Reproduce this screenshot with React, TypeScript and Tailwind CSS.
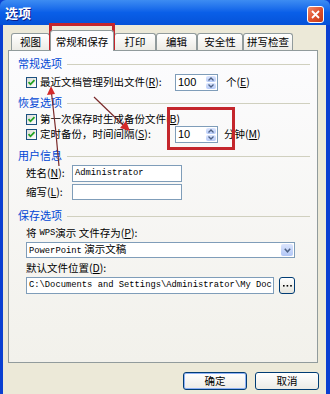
import React from 'react';

const K: React.FC<{ c: string }> = ({ c }) => <span className="underline">{c}</span>;

const Check: React.FC = () => (
  <div className="w-[11px] h-[11px] border border-[#1c5180] bg-gradient-to-br from-[#dcdcd7] to-white flex items-center justify-center shrink-0">
    <svg width="9" height="9" viewBox="0 0 9 9">
      <path d="M1.5 4.2 L3.5 6.3 L7.5 2.2" stroke="#21a121" strokeWidth="1.8" fill="none" />
    </svg>
  </div>
);

const Heading: React.FC<{ text: string; className?: string }> = ({ text, className }) => (
  <div className={`flex items-center h-[14px] pr-[7px] ${className ?? ''}`}>
    <span className="text-[#0046d5] text-[11px]">{text}</span>
    <div className="flex-1 h-px bg-[#d0d0bf] ml-[5px] mt-[2px]" />
  </div>
);

const Spin: React.FC<{ value: string }> = ({ value }) => (
  <div className="w-[43px] h-[17px] border border-[#7f9db9] bg-white flex items-center">
    <span className="flex-1 pl-[2px] font-['Liberation_Sans',sans-serif] text-[11px]">{value}</span>
    <div className="w-[12px] h-full flex flex-col gap-px p-px">
      <div className="flex-1 rounded-[2px] bg-gradient-to-b from-[#dbe5fd] to-[#b7cbf8] flex items-center justify-center">
        <svg width="6" height="4" viewBox="0 0 6 4"><path d="M0.5 3.5 L3 1 L5.5 3.5" stroke="#4d6185" strokeWidth="1.3" fill="none" /></svg>
      </div>
      <div className="flex-1 rounded-[2px] bg-gradient-to-b from-[#dbe5fd] to-[#b7cbf8] flex items-center justify-center">
        <svg width="6" height="4" viewBox="0 0 6 4"><path d="M0.5 0.5 L3 3 L5.5 0.5" stroke="#4d6185" strokeWidth="1.3" fill="none" /></svg>
      </div>
    </div>
  </div>
);

const tabBase =
  'h-[17px] border border-b-0 border-[#919b9c] rounded-t-[3px] bg-gradient-to-b from-white to-[#ecebe5] flex items-center justify-center';

export default function App() {
  return (
    <div className="relative w-[330px] h-[394px] overflow-hidden bg-[#0a3fd1] font-['Noto_Sans_CJK_SC',sans-serif] text-[10.5px] leading-none text-black">
      {/* 标题栏 */}
      <div className="h-[25px] flex items-center justify-between pl-[5px] pr-[6px] rounded-t-[6px] bg-gradient-to-b from-[#3d8cf2] via-[#0a5fe8] to-[#0552d8]">
        <span className="text-white font-bold text-[13px] [text-shadow:1px_1px_0_#0a1e8a]">选项</span>
        <div className="w-[17px] h-[17px] mt-[4px] rounded-[3px] border border-white bg-gradient-to-br from-[#f08a6a] via-[#e0512d] to-[#c23a18] flex items-center justify-center">
          <svg width="9" height="9" viewBox="0 0 9 9">
            <path d="M1 1 L8 8 M8 1 L1 8" stroke="white" strokeWidth="1.8" />
          </svg>
        </div>
      </div>

      {/* 对话框主体 */}
      <div className="ml-[3px] w-[323px] h-[369px] bg-[#ece9d8] pl-[5px] pt-[3px] flex flex-col">
        {/* 选项卡 */}
        <div className="h-[22px] flex items-end pl-[3px]">
          <div className={`${tabBase} w-[39px]`}>视图</div>
          <div className="relative z-10 -mb-px h-[21px] w-[64px] border border-b-0 border-[#919b9c] rounded-t-[3px] bg-[#fcfcfe] flex items-center justify-center pt-[2px]">
            常规和保存
          </div>
          <div className={`${tabBase} w-[42px]`}>打印</div>
          <div className={`${tabBase} w-[41px]`}>编辑</div>
          <div className={`${tabBase} w-[46px]`}>安全性</div>
          <div className={`${tabBase} w-[50px]`}>拼写检查</div>
        </div>

        {/* 面板 */}
        <div className="w-[310px] h-[313px] border border-[#919b9c] bg-gradient-to-b from-[#fcfcfe] to-[#f2f1eb] pl-[9px] pt-[5px] flex flex-col">
          <Heading text="常规选项" />
          <div className="mt-[3px] h-[18px] flex items-center pl-[8px]">
            <Check />
            <span className="ml-[3px] w-[135px]">
              最近文档管理列出文件(<K c="R" />):
            </span>
            <Spin value="100" />
            <span className="ml-[8px]">
              个(<K c="E" />)
            </span>
          </div>

          <Heading text="恢复选项" className="mt-[4px]" />
          <div className="mt-[3px] h-[14px] flex items-center pl-[8px]">
            <Check />
            <span className="ml-[3px]">
              第一次保存时生成备份文件(<K c="B" />)
            </span>
          </div>
          <div className="h-[16px] flex items-center pl-[8px]">
            <Check />
            <span className="ml-[3px] w-[135px]">
              定时备份，时间间隔(<K c="S" />):
            </span>
            <Spin value="10" />
            <span className="ml-[6px]">
              分钟(<K c="M" />)
            </span>
          </div>

          <Heading text="用户信息" className="mt-[6px]" />
          <div className="mt-[3px] h-[17px] flex items-center pl-[8px]">
            <span className="w-[46px]">
              姓名(<K c="N" />):
            </span>
            <div className="w-[110px] h-[17px] border border-[#7f9db9] bg-white flex items-center pl-[2px] font-['Liberation_Mono',monospace] text-[8.8px]">
              Administrator
            </div>
          </div>
          <div className="mt-[2px] h-[16px] flex items-center pl-[8px]">
            <span className="w-[46px]">
              缩写(<K c="L" />):
            </span>
            <div className="w-[110px] h-[16px] border border-[#7f9db9] bg-white" />
          </div>

          <Heading text="保存选项" className="mt-[8px]" />
          <div className="mt-[4px] h-[14px] flex items-center pl-[8px]">
            将 <span className="font-['Liberation_Mono',monospace] text-[8.8px] ml-[3px]">WPS</span>演示 文件存为(<K c="P" />):
          </div>
          <div className="mt-[2px] ml-[8px] w-[269px] h-[16px] border border-[#7f9db9] bg-white flex items-center">
            <span className="flex-1 pl-[2px]">
              <span className="font-['Liberation_Mono',monospace] text-[8.8px]">PowerPoint</span> 演示文稿
            </span>
            <div className="w-[14px] h-full p-px">
              <div className="w-full h-full rounded-[2px] bg-gradient-to-b from-[#dbe5fd] to-[#b2c7f6] flex items-center justify-center">
                <svg width="7" height="5" viewBox="0 0 7 5"><path d="M0.8 0.8 L3.5 3.8 L6.2 0.8" stroke="#4d6185" strokeWidth="1.5" fill="none" /></svg>
              </div>
            </div>
          </div>
          <div className="mt-[3px] h-[14px] flex items-center pl-[8px]">
            默认文件位置(<K c="D" />):
          </div>
          <div className="mt-[2px] pl-[8px] h-[17px] flex items-center gap-[5px]">
            <div className="w-[248px] h-[17px] border border-[#7f9db9] bg-white flex items-center pl-[2px] overflow-hidden whitespace-nowrap font-['Liberation_Mono',monospace] text-[8.8px]">
              C:\Documents and Settings\Administrator\My Doc
            </div>
            <div className="w-[16px] h-[17px] rounded-[3px] border border-[#003c74] bg-gradient-to-b from-white to-[#e6e5de] flex items-center justify-center">
              <svg width="9" height="3" viewBox="0 0 9 3">
                <rect x="0" y="1" width="1.6" height="1.6" fill="#000" />
                <rect x="3.6" y="1" width="1.6" height="1.6" fill="#000" />
                <rect x="7.2" y="1" width="1.6" height="1.6" fill="#000" />
              </svg>
            </div>
          </div>
        </div>

        {/* 按钮 */}
        <div className="mt-[9px] h-[18px] flex justify-end gap-[8px] pr-[7px]">
          <div className="w-[64px] h-[18px] rounded-[3px] border border-[#003c74] bg-gradient-to-b from-white to-[#ecebe6] shadow-[inset_0_0_0_1px_#8fb1f5] flex items-center justify-center">
            确定
          </div>
          <div className="w-[64px] h-[18px] rounded-[3px] border border-[#003c74] bg-gradient-to-b from-white to-[#ecebe6] flex items-center justify-center">
            取消
          </div>
        </div>
      </div>

      {/* 红色标注 */}
      <svg className="absolute inset-0 pointer-events-none" width="330" height="394" viewBox="0 0 330 394">
        <rect x="50.5" y="24.5" width="63" height="24" fill="none" stroke="#c4262c" strokeWidth="3" />
        <rect x="168.5" y="108.5" width="65" height="40" fill="none" stroke="#c4262c" strokeWidth="3" />
        <path d="M59 166 Q56 130 51.5 93" stroke="#7a2a2a" strokeWidth="1.2" fill="none" />
        <path d="M51 86 L47 95 L55 94 Z" fill="#d42a2a" />
        <path d="M94 97 L123 125" stroke="#7a2a2a" strokeWidth="1.2" fill="none" />
        <path d="M130 131 L120 128 L126 121 Z" fill="#d42a2a" />
      </svg>
    </div>
  );
}
